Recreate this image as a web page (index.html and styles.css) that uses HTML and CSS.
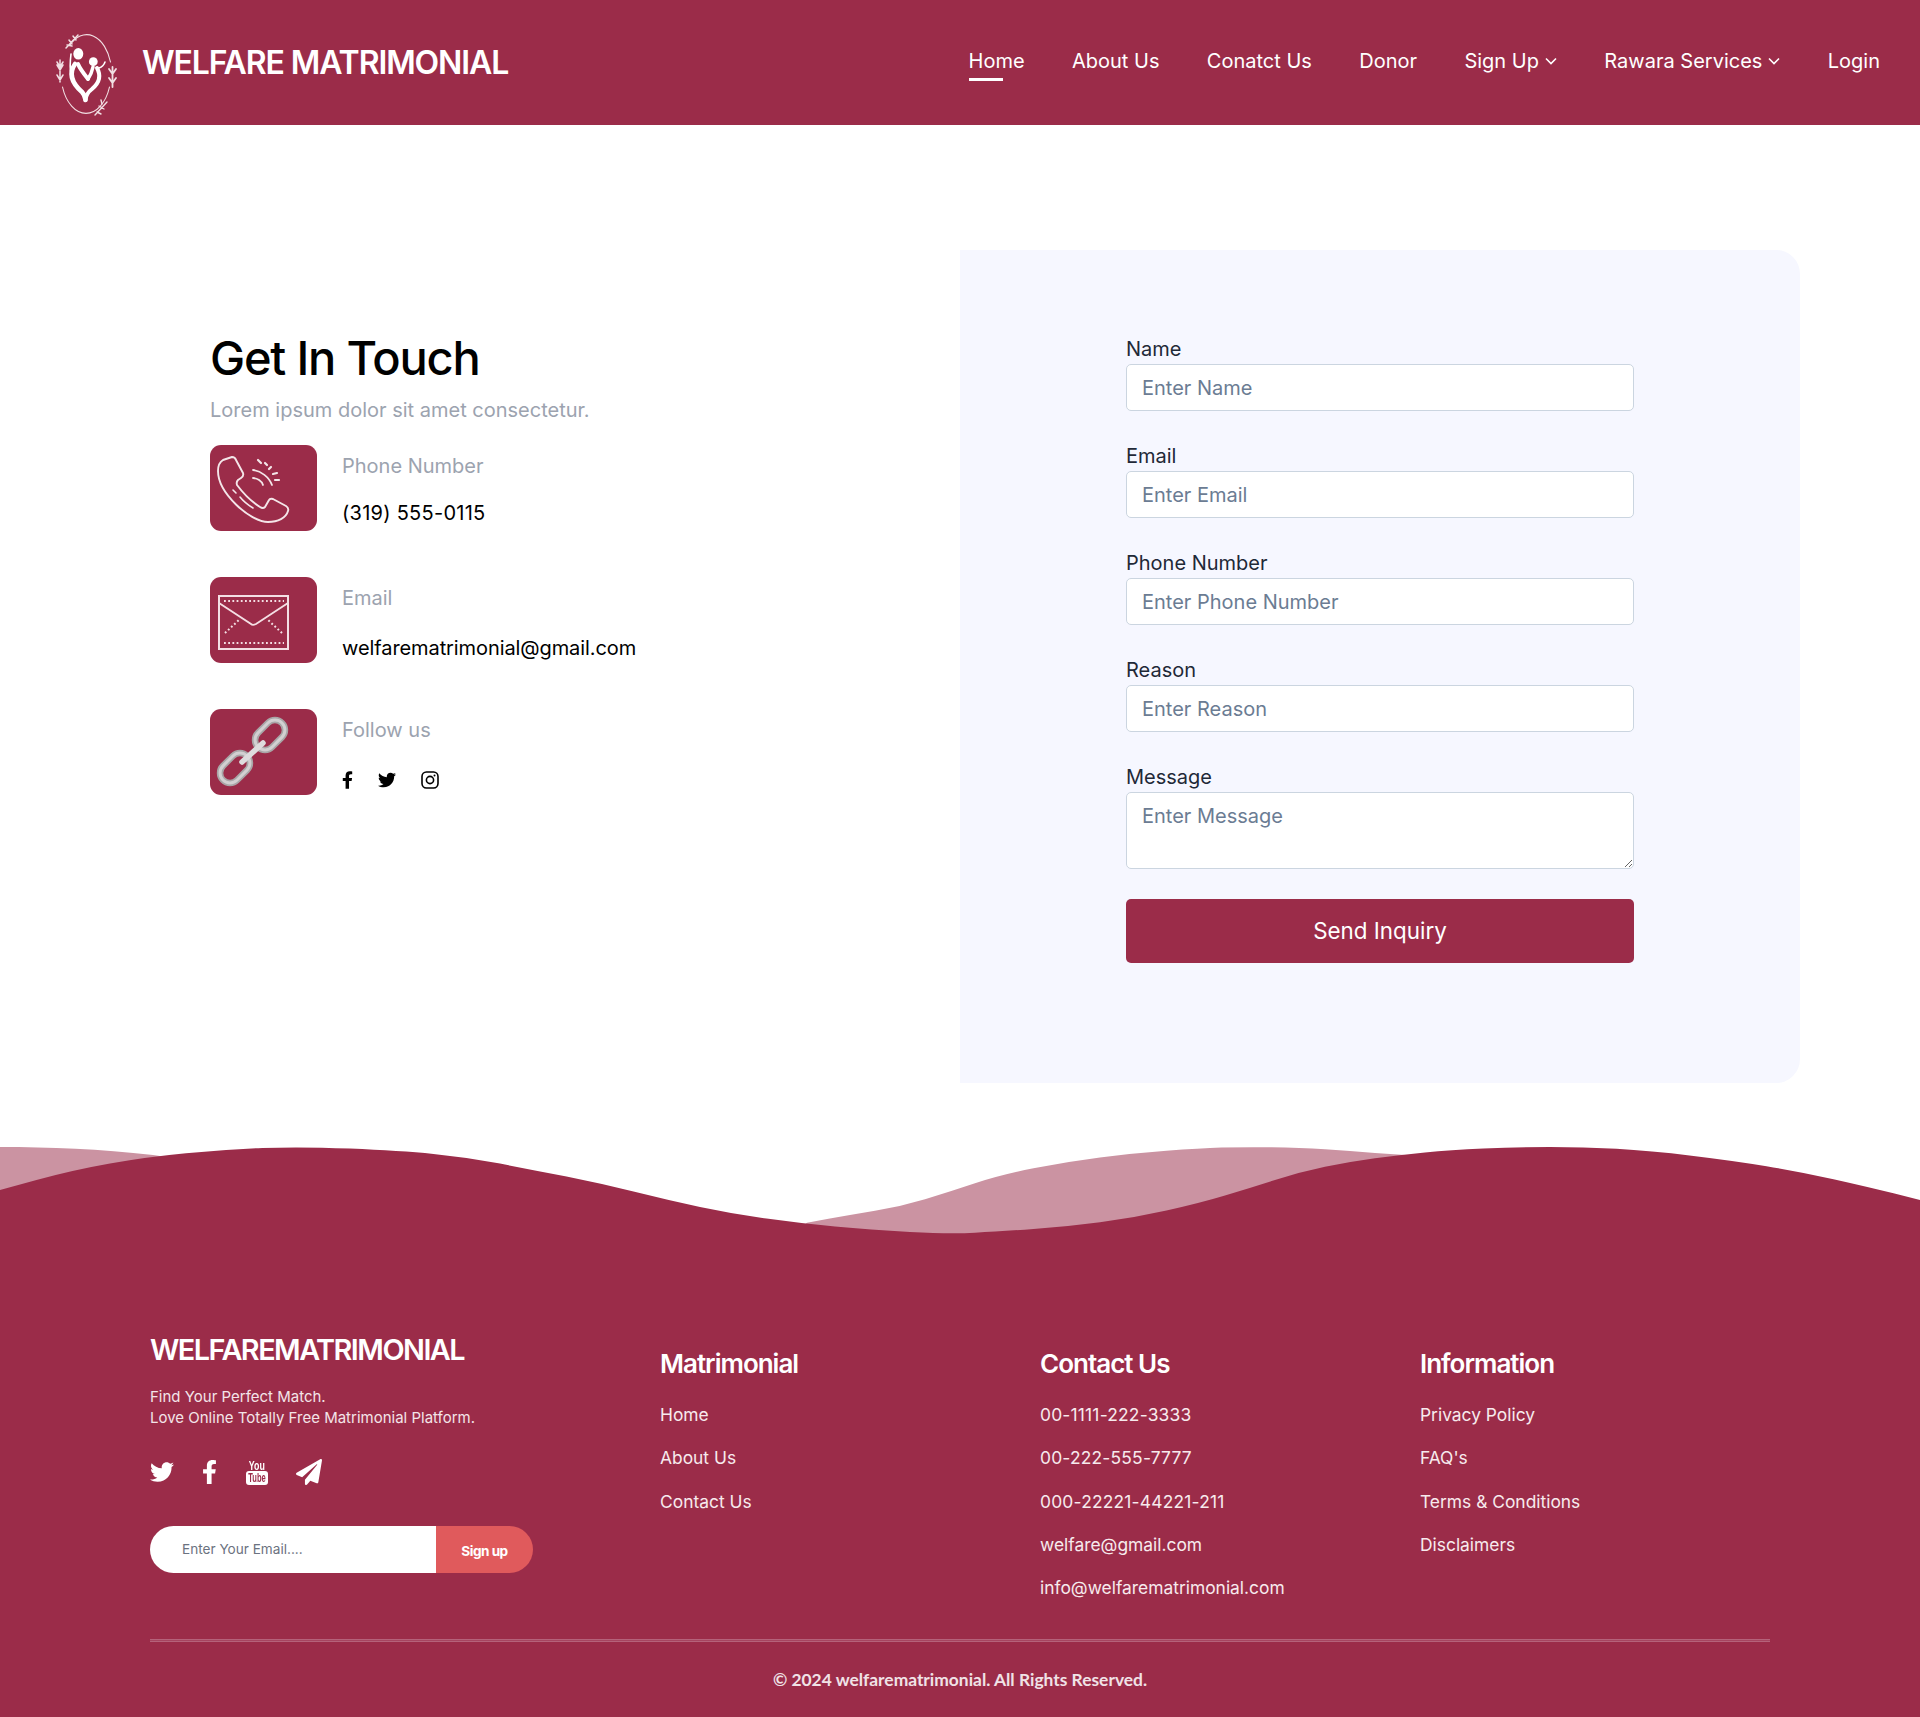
FILE: index.html
```html
<!DOCTYPE html>
<html lang="en">
<head>
<meta charset="utf-8">
<title>Welfare Matrimonial</title>
<link rel="stylesheet" href="styles.css">
</head>
<body>
<header class="site-header">
  <a class="brand" href="#">
    <svg class="brand-logo" viewBox="0 0 64 86" fill="none" stroke="#f1dfe3" stroke-linecap="round">
      <path d="M15 13A25 40 0 0 1 55.5 30M54.5 55A25 40 0 0 1 7.5 55" stroke-width="1.1"/>
      <path d="M11 16L23 3M14 8l3 4M18 4l3 4M12 13l5 1" stroke-width="1.5"/>
      <path d="M5 28V50M2 30l3 5 3-5M2 33l3 5 3-5M2 43l3 5 3-5" stroke-width="1.5"/>
      <path d="M57.5 35V55M54 37l3.500 5 3.500-5M54 46l3.500 5 3.500-5" stroke-width="1.8"/>
      <path d="M40 83L52 70M44 74l5 3M47 72l-1-4M42 80l4 2" stroke-width="1.4"/>
      <g stroke="#fff" class="logo-figure">
        <ellipse cx="23.300" cy="21.800" rx="5" ry="5.800" fill="#fff" stroke="none"/>
        <circle cx="38.300" cy="29.700" r="4.400" fill="#fff" stroke="none"/>
        <path d="M20 32C13 42 18 52 27 60C30 63 30 65 30.500 68" stroke-width="4.600"/>
        <path d="M23 32C25 37 29 42 33 47" stroke-width="4"/>
        <path d="M42 36C47 45 43 52 37 57C33 60 31 63 30.500 68" stroke-width="4"/>
        <path d="M38 35C37 40 35 44 33 47" stroke-width="3.500"/>
        <path d="M16 22C15 30 15 38 16 43M44 36C47 35 49 33 50 30" stroke-width="1.600"/>
      </g>
    </svg>
    <span class="brand-name">WELFARE MATRIMONIAL</span>
  </a>
  <nav class="main-nav">
    <a class="nav-link is-active" href="#">Home</a>
    <a class="nav-link" href="#">About Us</a>
    <a class="nav-link" href="#">Conatct Us</a>
    <a class="nav-link" href="#">Donor</a>
    <a class="nav-link" href="#">Sign Up<svg class="chev" viewBox="0 0 12 8"><path d="M1 1.500l5 5 5-5"/></svg></a>
    <a class="nav-link" href="#">Rawara Services<svg class="chev" viewBox="0 0 12 8"><path d="M1 1.500l5 5 5-5"/></svg></a>
    <a class="nav-link" href="#">Login</a>
  </nav>
</header>

<main class="contact">
  <section class="contact-info">
    <h1 class="contact-title">Get In Touch</h1>
    <p class="contact-sub">Lorem ipsum dolor sit amet consectetur.</p>

    <div class="info-row">
      <div class="info-icon">
        <svg class="info-svg" viewBox="0 0 107 86" fill="none" stroke="#f4e6e9" stroke-linecap="round" stroke-linejoin="round">
          <path d="M13 15L22 12Q25 12 26 15L33 28Q34 31 31 33L28 35Q26 37 27 40C33 48 42 57 50 62Q53 64 55 62L59 55Q60 53 63 54L76 61Q79 63 78 66C76 73 68 77 58 77C40 77 8 48 8 26Q8 18 13 15Z" stroke-width="1.900"/>
          <path d="M23 45L26 48M30 52C34 57 38 60 43 63" stroke-width="1.600"/>
          <path d="M43 25C51 26 59 32 62 40M43 33C47 33 52 36 53 40" stroke-width="1.800"/>
          <path d="M48 15l3 3M55 18l2 2M61 22l-2 2M67 28l-4 1M69 35h-4" stroke-width="2.200"/>
        </svg>
      </div>
      <div class="info-text">
        <span class="info-label">Phone Number</span>
        <span class="info-value info-value-tel">(319) 555-0115</span>
      </div>
    </div>

    <div class="info-row">
      <div class="info-icon">
        <svg class="info-svg" viewBox="0 0 107 86" fill="none" stroke="#f4dfe4">
          <rect x="9" y="19" width="69" height="53" stroke-width="2"/>
          <path d="M9 26L41 47C42 48 44 48 46 47L78 26" stroke-width="1.900"/>
          <path d="M14 24H74M14 66H74M15 56L30 42M72 56L57 42" stroke-width="2" stroke-dasharray="1.800 2.400"/>
        </svg>
      </div>
      <div class="info-text">
        <span class="info-label">Email</span>
        <span class="info-value info-value-wide">welfarematrimonial@gmail.com</span>
      </div>
    </div>

    <div class="info-row">
      <div class="info-icon">
        <svg class="info-svg chain" viewBox="0 0 107 86" fill="none" stroke-linecap="round">
          <g stroke="#a9a6a7" stroke-width="6.500">
            <rect x="50" y="9" width="20" height="34" rx="10" transform="rotate(45 60 26)"/>
            <rect x="15" y="42" width="20" height="34" rx="10" transform="rotate(45 25 59)"/>
          </g>
          <g stroke="#d2d0d1" stroke-width="3">
            <rect x="50" y="9" width="20" height="34" rx="10" transform="rotate(45 60 26)"/>
            <rect x="15" y="42" width="20" height="34" rx="10" transform="rotate(45 25 59)"/>
          </g>
          <path d="M32 53L53 34" stroke="#dedcdd" stroke-width="5.500"/>
        </svg>
      </div>
      <div class="info-text">
        <span class="info-label">Follow us</span>
        <span class="follow-icons">
          <svg class="follow-f" viewBox="0 0 320 512"><path d="M279.14 288l14.22-92.66h-88.91v-60.13c0-25.35 12.42-50.06 52.24-50.06h40.42V6.26S260.43 0 225.36 0c-73.22 0-121.08 44.38-121.08 124.72v70.62H22.89V288h81.39v224h100.17V288z"/></svg>
          <svg class="follow-t" viewBox="0 0 512 512"><path d="M459.37 151.716c.325 4.548.325 9.097.325 13.645 0 138.72-105.583 298.558-298.558 298.558-59.452 0-114.68-17.219-161.137-47.106 8.447.974 16.568 1.299 25.34 1.299 49.055 0 94.213-16.568 130.274-44.832-46.132-.975-84.792-31.188-98.112-72.772 6.498.974 12.995 1.624 19.818 1.624 9.421 0 18.843-1.3 27.614-3.573-48.081-9.747-84.143-51.98-84.143-102.985v-1.299c13.969 7.797 30.214 12.67 47.431 13.319-28.264-18.843-46.781-51.005-46.781-87.391 0-19.492 5.197-37.36 14.294-52.954 51.655 63.675 129.3 105.258 216.365 109.807-1.624-7.797-2.599-15.918-2.599-24.04 0-57.828 46.782-104.934 104.934-104.934 30.213 0 57.502 12.67 76.67 33.137 23.715-4.548 46.456-13.32 66.599-25.34-7.798 24.366-24.366 44.833-46.132 57.827 21.117-2.273 41.584-8.122 60.426-16.243-14.292 20.791-32.161 39.308-52.628 54.253z"/></svg>
          <svg class="follow-i" viewBox="0 0 18 18" fill="none"><rect x="1" y="1" width="16" height="16" rx="4.400" stroke="#000" stroke-width="1.600"/><circle cx="9" cy="9" r="3.600" stroke="#000" stroke-width="1.600"/><circle cx="13.500" cy="4.500" r="1" fill="#000"/></svg>
        </span>
      </div>
    </div>
  </section>

  <section class="contact-panel">
    <form class="contact-form">
      <label class="field"><span class="field-label">Name</span><input class="field-input" type="text" placeholder="Enter Name"></label>
      <label class="field"><span class="field-label">Email</span><input class="field-input" type="text" placeholder="Enter Email"></label>
      <label class="field"><span class="field-label">Phone Number</span><input class="field-input" type="text" placeholder="Enter Phone Number"></label>
      <label class="field"><span class="field-label">Reason</span><input class="field-input" type="text" placeholder="Enter Reason"></label>
      <label class="field field-last"><span class="field-label">Message</span><textarea class="field-input field-area" placeholder="Enter Message"></textarea></label>
      <button class="send-btn" type="button">Send Inquiry</button>
    </form>
  </section>
</main>

<svg class="wave" viewBox="0 0 1920 90" preserveAspectRatio="none">
  <path class="wave-back" d="M0 0C50 0 100 2 153 8L500 60L700 90H790L807 75.700L828.500 71.800Q850 68 875 63.800Q900 59.700 925 52.200Q950 44.700 975 36.300Q1000 28 1033.500 21.300Q1067 14.700 1100 10.500Q1133 6.300 1166.500 3.800Q1200 1.300 1221.500 .6Q1243 0 1271.500 .3Q1300 .7 1325 2.300Q1350 4 1375 6L1420 9V90H0Z"/>
  <path class="wave-front" d="M0 43L36.500 33Q73 23 110 16.500Q147 10 186 6.300Q225 2.500 262.500 1Q300 -.5 350 1.600Q400 3.700 433.500 7Q467 10.300 500 16.600Q533 23 566.500 29.600Q600 36.300 633.500 44.600Q667 53 700 60Q733 67 766.500 71.600Q800 76.300 835 79.600Q870 83 910 85Q950 87 975 85.700Q1000 84.500 1033.500 82Q1067 79.700 1100 75.300Q1133 71 1166.500 63.500Q1200 56 1225 48.500Q1250 41 1275 33Q1300 25 1325 19.800Q1350 14.700 1375 11.300Q1400 8 1425 5.500Q1450 3 1483.500 1.500Q1517 0 1550 0Q1583 0 1616.500 1.800Q1650 3.700 1691.500 8.700Q1733 13.700 1766.500 19.200Q1800 24.700 1833.500 32.200Q1867 39.700 1893.500 46.300L1920 53V90H0Z"/>
</svg>

<footer class="site-footer">
  <div class="footer-grid">
    <div class="footer-about">
      <div class="footer-brand">WELFAREMATRIMONIAL</div>
      <p class="footer-tag">Find Your Perfect Match.<br>Love Online Totally Free Matrimonial Platform.</p>
      <div class="footer-social">
        <svg class="soc-t" viewBox="0 0 512 512"><path d="M459.37 151.716c.325 4.548.325 9.097.325 13.645 0 138.72-105.583 298.558-298.558 298.558-59.452 0-114.68-17.219-161.137-47.106 8.447.974 16.568 1.299 25.34 1.299 49.055 0 94.213-16.568 130.274-44.832-46.132-.975-84.792-31.188-98.112-72.772 6.498.974 12.995 1.624 19.818 1.624 9.421 0 18.843-1.3 27.614-3.573-48.081-9.747-84.143-51.98-84.143-102.985v-1.299c13.969 7.797 30.214 12.67 47.431 13.319-28.264-18.843-46.781-51.005-46.781-87.391 0-19.492 5.197-37.36 14.294-52.954 51.655 63.675 129.3 105.258 216.365 109.807-1.624-7.797-2.599-15.918-2.599-24.04 0-57.828 46.782-104.934 104.934-104.934 30.213 0 57.502 12.67 76.67 33.137 23.715-4.548 46.456-13.32 66.599-25.34-7.798 24.366-24.366 44.833-46.132 57.827 21.117-2.273 41.584-8.122 60.426-16.243-14.292 20.791-32.161 39.308-52.628 54.253z"/></svg>
        <svg class="soc-f" viewBox="0 0 320 512"><path d="M279.14 288l14.22-92.66h-88.91v-60.13c0-25.35 12.42-50.06 52.24-50.06h40.42V6.26S260.43 0 225.36 0c-73.22 0-121.08 44.38-121.08 124.72v70.62H22.89V288h81.39v224h100.17V288z"/></svg>
        <span class="soc-y"><span class="soc-y-you">You</span><span class="soc-y-box"><span class="soc-y-tube">Tube</span></span></span>
        <svg class="soc-p" viewBox="0 0 512 512"><path d="M476 3.2L12.5 270.6c-18.1 10.4-15.8 35.6 2.2 43.2L121 358.4l287.3-253.2c5.5-4.9 13.3 2.6 8.6 8.3L176 407v80.5c0 23.6 28.5 32.9 42.5 15.8L282 426l124.6 52.2c14.2 6 30.4-2.9 33-18.2l72-432C515 7.8 493.3-6.8 476 3.2z"/></svg>
      </div>
      <form class="newsletter">
        <input class="newsletter-input" type="text" placeholder="Enter Your Email....">
        <button class="newsletter-btn" type="button">Sign up</button>
      </form>
    </div>
    <div class="footer-col">
      <h3 class="footer-head">Matrimonial</h3>
      <a class="footer-link" href="#">Home</a>
      <a class="footer-link" href="#">About Us</a>
      <a class="footer-link" href="#">Contact Us</a>
    </div>
    <div class="footer-col">
      <h3 class="footer-head">Contact Us</h3>
      <a class="footer-link footer-num" href="#">00-1111-222-3333</a>
      <a class="footer-link footer-num" href="#">00-222-555-7777</a>
      <a class="footer-link footer-num" href="#">000-22221-44221-211</a>
      <a class="footer-link" href="#">welfare@gmail.com</a>
      <a class="footer-link" href="#">info@welfarematrimonial.com</a>
    </div>
    <div class="footer-col">
      <h3 class="footer-head">Information</h3>
      <a class="footer-link" href="#">Privacy Policy</a>
      <a class="footer-link" href="#">FAQ's</a>
      <a class="footer-link" href="#">Terms &amp; Conditions</a>
      <a class="footer-link" href="#">Disclaimers</a>
    </div>
  </div>
  <hr class="footer-rule">
  <p class="copyright">© 2024 welfarematrimonial. All Rights Reserved.</p>
</footer>
</body>
</html>
```

FILE: styles.css
```css
* { box-sizing: border-box; }
html, body { margin: 0; padding: 0; }
body { font-family: Inter, "Liberation Sans", sans-serif; color: #000; background: #fff; width: 1920px; height: 1717px; overflow: hidden; }
a { color: inherit; text-decoration: none; }

.site-header { height: 125px; background: #9b2c49; display: flex; align-items: center; justify-content: space-between; padding: 0 40px 0 55px; color: #fff; }
.brand { display: flex; align-items: center; gap: 23px; }
.brand-logo { width: 64px; height: 86px; margin-top: 25px; filter: blur(0.4px); }
.brand-name { font-size: 32px; font-weight: 600; letter-spacing: -1.1px; line-height: 40px; }
.main-nav { display: flex; gap: 47.4px; align-items: center; padding-bottom: 3px; }
.nav-link { position: relative; font-size: 20px; line-height: 24px; display: flex; align-items: center; }
.nav-link.is-active::after { content: ""; position: absolute; left: 0; top: 29px; width: 34px; height: 3px; background: #fff; }
.chev { width: 12px; height: 8px; margin-left: 6px; fill: none; stroke: #fff; stroke-width: 1.6; }

.contact { display: grid; grid-template-columns: 960px 840px; padding-top: 125px; }
.contact-info { padding: 0 0 0 210px; }
.contact-title { margin: 79px 0 0; font-size: 47px; font-weight: 500; letter-spacing: -1.2px; line-height: 58px; }
.contact-sub { margin: 9px 0 0; font-size: 20px; line-height: 28px; color: #9ca3af; }
.info-row { display: flex; gap: 25px; margin-top: 46px; }
.contact-sub + .info-row { margin-top: 21px; }
.info-icon { width: 107px; height: 86px; background: #9b2c49; border-radius: 11px; flex: none; }
.info-svg { display: block; width: 107px; height: 86px; }
.chain { filter: blur(0.5px); }
.info-text { display: flex; flex-direction: column; padding-top: 9px; }
.info-label { font-size: 20px; line-height: 24px; color: #9ca3af; }
.info-value { font-size: 20px; line-height: 24px; margin-top: 23px; }
.info-value-tel { letter-spacing: 0.26px; }
.info-value-wide { margin-top: 26px; letter-spacing: -0.09px; }
.follow-icons { display: flex; align-items: center; height: 20px; margin-top: 28px; }
.follow-f { width: 11px; height: 18px; }
.follow-t { width: 18px; height: 18px; margin-left: 25px; }
.follow-i { width: 18px; height: 18px; margin-left: 25px; }

.contact-panel { height: 833px; background: #f6f7ff; border-radius: 0 24px 24px 0; display: flex; justify-content: center; padding-top: 87px; }
.contact-form { width: 508px; display: flex; flex-direction: column; }
.field { display: flex; flex-direction: column; margin-bottom: 33px; }
.field-last { margin-bottom: 30px; }
.field-label { font-size: 20px; line-height: 24px; margin-bottom: 3px; color: #1f2937; }
.field-input { display: block; width: 508px; height: 47px; padding: 0 15px; border: 1px solid #cbd5e0; border-radius: 5px; background: #fff; font-family: Inter, "Liberation Sans", sans-serif; font-size: 20px; color: #111; outline: none; }
.field-input::placeholder { color: #6b7c93; opacity: 1; }
.field-area { height: 77px; padding-top: 11px; line-height: 24px; resize: vertical; }
.send-btn { height: 64px; width: 508px; padding: 0 0 2px; background: #9b2c49; border: 0; border-radius: 5px; color: #fff; font-family: Inter, "Liberation Sans", sans-serif; font-size: 22.4px; }

.wave { display: block; width: 1920px; height: 90px; margin-top: 64px; }
.wave-back { fill: #cb93a2; }
.wave-front { fill: #9b2c49; }

.site-footer { background: #9b2c49; color: #fff; height: 481px; padding: 96px 150px 0; margin-top: -1px; }
.footer-grid { display: grid; grid-template-columns: 510px 380px 380px 350px; height: 307px; }
.footer-brand { font-size: 28.8px; font-weight: 600; letter-spacing: -1.5px; line-height: 36px; }
.footer-tag { margin: 18px 0 0; font-size: 15px; line-height: 21px; color: #f3e4e8; }
.footer-social { display: flex; align-items: center; height: 30px; margin-top: 29px; }
.soc-t { width: 24px; height: 24px; fill: #fff; }
.soc-f { width: 15px; height: 24px; fill: #fff; margin-left: 28px; }
.soc-y { display: flex; flex-direction: column; align-items: center; width: 22px; margin-left: 29px; font-family: "Liberation Sans", sans-serif; font-weight: 700; line-height: 1; }
.soc-y-you { display: block; font-size: 13px; height: 11px; line-height: 11px; transform: scaleX(0.68); }
.soc-y-box { display: flex; justify-content: center; background: #fff; color: #9b2c49; border-radius: 3px; width: 22px; height: 14px; line-height: 14px; font-size: 13px; overflow: hidden; }
.soc-y-tube { display: block; flex: none; transform: scaleX(0.58); }
.soc-p { width: 26px; height: 26px; fill: #fff; margin-left: 28px; }
.newsletter { display: flex; width: 383px; height: 47px; margin-top: 39px; border-radius: 24px; overflow: hidden; }
.newsletter-input { width: 286px; border: 0; padding: 0 0 2px 32px; background: #fff; font-family: Inter, "Liberation Sans", sans-serif; font-size: 13.6px; outline: none; }
.newsletter-input::placeholder { color: #6b7280; opacity: 1; }
.newsletter-btn { flex: 1; border: 0; background: #e05a5c; color: #fff; font-family: Inter, "Liberation Sans", sans-serif; font-size: 13.6px; font-weight: 700; letter-spacing: -0.5px; padding: 2px 0 0; }
.footer-col { display: flex; flex-direction: column; padding-top: 16px; }
.footer-head { margin: 0 0 22px; font-size: 26px; font-weight: 600; letter-spacing: -1px; line-height: 32px; }
.footer-link { font-size: 17.4px; line-height: 26px; margin-bottom: 17.3px; color: #f7eaed; }
.footer-num { letter-spacing: 0.2px; }
.footer-rule { margin: 0; width: 1620px; height: 3px; border: 0; border-top: 1px solid #b5627a; border-bottom: 1px solid #b5627a; background: #a64560; }
.copyright { margin: 26px 0 0; text-align: center; font-family: Lato, sans-serif; font-weight: 700; font-size: 17.4px; line-height: 24px; color: #f0e2e6; }
```
